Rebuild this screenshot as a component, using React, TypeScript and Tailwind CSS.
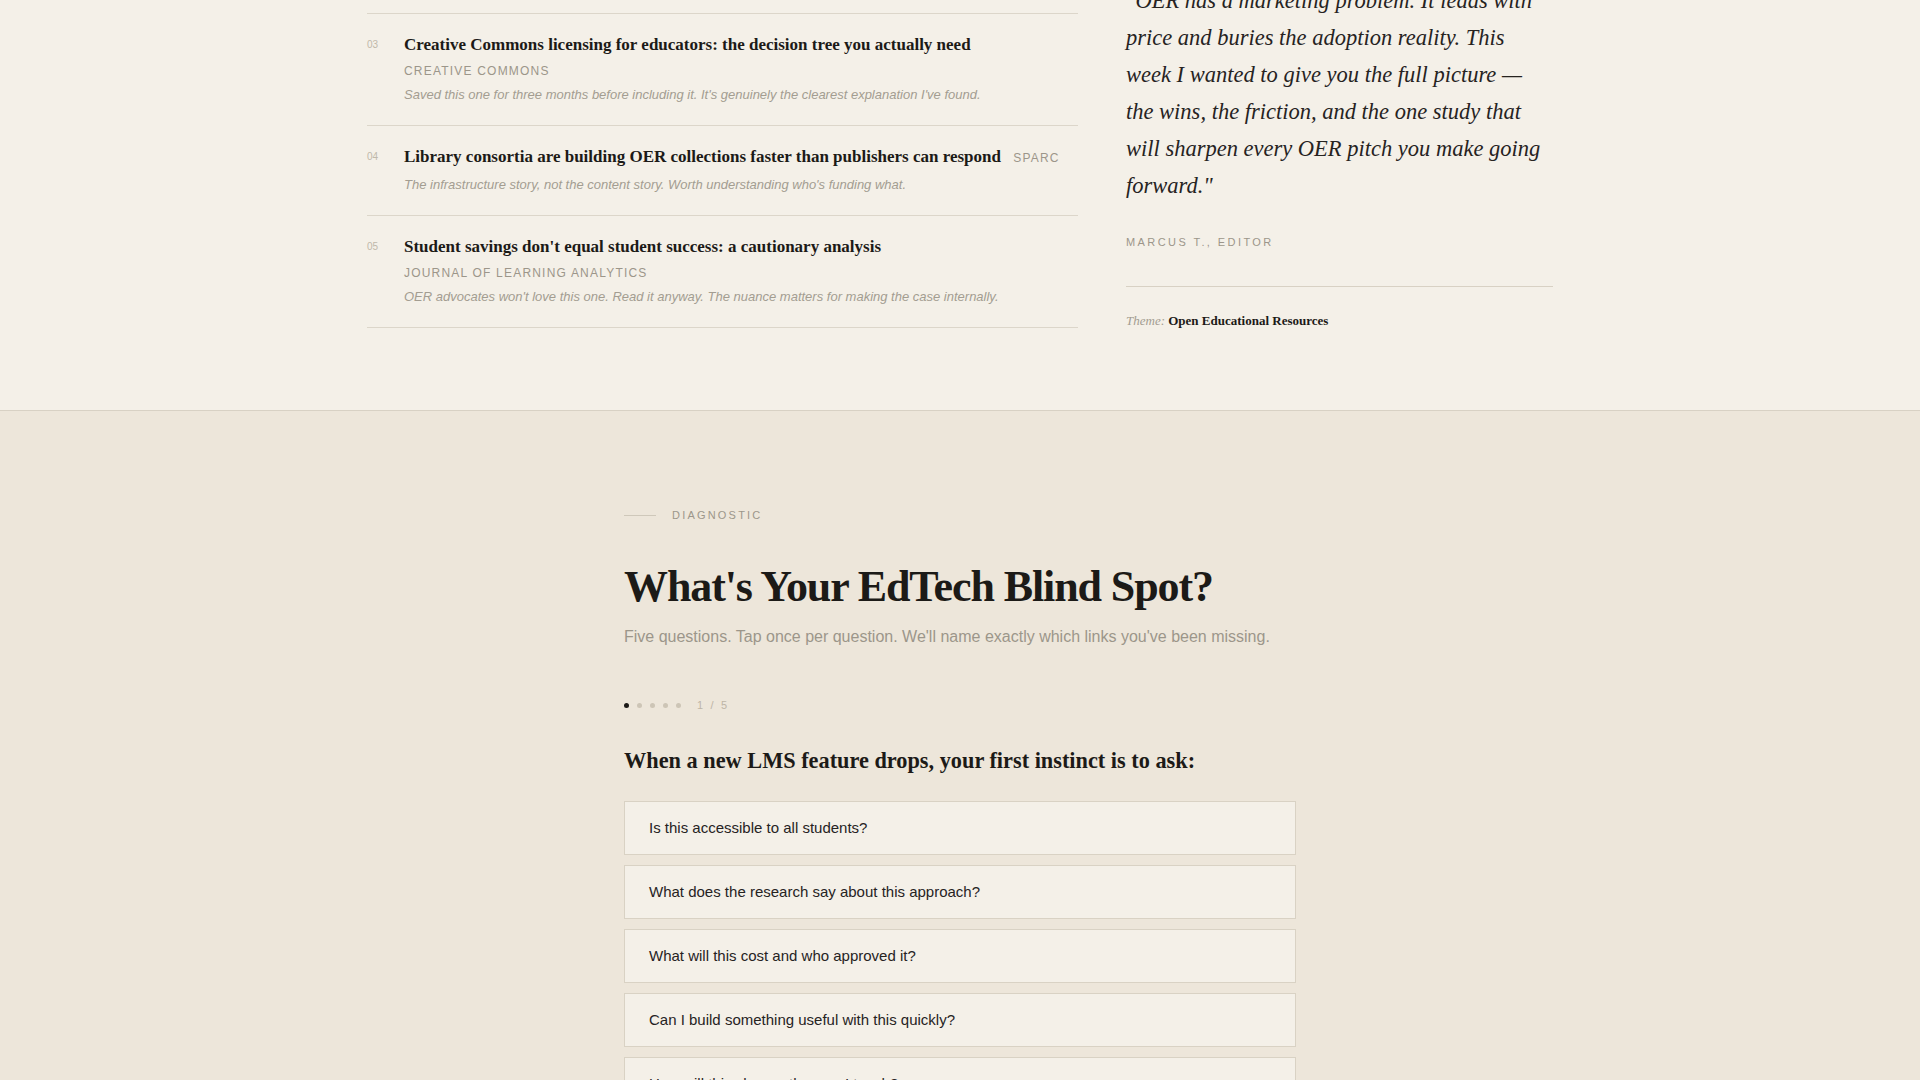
import React from 'react';

const serif = { fontFamily: '"Liberation Serif", "Times New Roman", serif' };
const sans = { fontFamily: '"Liberation Sans", Arial, sans-serif' };

interface Reading {
  num: string;
  title: string;
  source: string;
  note: string;
}

const readings: Reading[] = [
  {
    num: '03',
    title: 'Creative Commons licensing for educators: the decision tree you actually need',
    source: 'Creative Commons',
    note: "Saved this one for three months before including it. It's genuinely the clearest explanation I've found.",
  },
  {
    num: '04',
    title: 'Library consortia are building OER collections faster than publishers can respond',
    source: 'SPARC',
    note: "The infrastructure story, not the content story. Worth understanding who's funding what.",
  },
  {
    num: '05',
    title: "Student savings don't equal student success: a cautionary analysis",
    source: 'Journal of Learning Analytics',
    note: "OER advocates won't love this one. Read it anyway. The nuance matters for making the case internally.",
  },
];

const options = [
  'Is this accessible to all students?',
  'What does the research say about this approach?',
  'What will this cost and who approved it?',
  'Can I build something useful with this quickly?',
  'How will this change the way I teach?',
];

const ReadingRow: React.FC<{ item: Reading }> = ({ item }) => (
  <li className="flex border-b border-[#dcd6ca] pt-4 pb-5">
    <span className="w-[37px] shrink-0 pt-[10px] text-[10px] leading-[10px] text-[#bfb8aa]" style={sans}>
      {item.num}
    </span>
    <div className="min-w-0 flex-1">
      <p className="text-[17px] leading-[22px]" style={serif}>
        <span className="font-bold leading-[29px] text-[#1c1a17]">{item.title}</span>
        {/* collapsible gap: disappears when the source wraps to its own line */}
        <span className="[word-spacing:8px]"> </span>
        <span
          className="inline-block whitespace-nowrap text-[12px] uppercase leading-[16px] tracking-[0.1em] text-[#9c968a]"
          style={sans}
        >
          {item.source}
        </span>
      </p>
      <p className="mt-1 text-[13px] italic leading-[20px] text-[#a39d91]" style={sans}>
        {item.note}
      </p>
    </div>
  </li>
);

export default function App() {
  return (
    <div className="min-h-screen bg-[#ede6da]">
      {/* Reading list + editor's note */}
      <section className="border-b border-[#d8d1c4] bg-[#f4f0e8] pt-[13px] pb-[79px]">
        <div className="mx-auto grid w-[1186px] grid-cols-[711px_1fr] gap-12">
          <ul className="border-t border-[#dcd6ca]">
            {readings.map((r) => (
              <ReadingRow key={r.num} item={r} />
            ))}
          </ul>

          <aside className="-mt-[31px]">
            <p className="text-[22.5px] italic leading-[37px] text-[#26231f]" style={serif}>
              "OER has a marketing problem. It leads with price and buries the adoption reality. This week I
              wanted to give you the full picture — the wins, the friction, and the one study that will sharpen
              every OER pitch you make going forward."
            </p>
            <p className="mt-[30px] text-[11px] uppercase leading-[16px] tracking-[0.22em] text-[#9c968a]" style={sans}>
              Marcus T., Editor
            </p>
            <div className="mt-9 border-t border-[#d8d1c4] pt-6">
              <p className="text-[13px] leading-[20px]" style={serif}>
                <span className="italic text-[#a39d91]">Theme:</span>{' '}
                <span className="font-bold text-[#1c1a17]">Open Educational Resources</span>
              </p>
            </div>
          </aside>
        </div>
      </section>

      {/* Diagnostic quiz */}
      <section className="pt-[95px] pb-24">
        <div className="mx-auto max-w-2xl">
          <div className="flex items-center gap-4">
            <span className="h-px w-8 bg-[#cfc8ba]" />
            <span className="text-[11px] uppercase leading-[18px] tracking-[0.2em] text-[#9c968a]" style={sans}>
              Diagnostic
            </span>
          </div>

          <h2
            className="mt-9 text-[44px] font-bold leading-[53px] tracking-tight text-[#1c1a17]"
            style={serif}
          >
            What's Your EdTech Blind Spot?
          </h2>
          <p className="mt-3 text-[16px] leading-[24px] text-[#9c968a]" style={sans}>
            Five questions. Tap once per question. We'll name exactly which links you've been missing.
          </p>

          <div className="mt-[49px] flex items-center gap-2">
            {[0, 1, 2, 3, 4].map((i) => (
              <span
                key={i}
                className={i === 0 ? 'h-[5px] w-[5px] rounded-full bg-[#1c1a17]' : 'h-[5px] w-[5px] rounded-full bg-[#cdc5b6]'}
              />
            ))}
            <span className="ml-2 text-[11px] leading-[14px] tracking-[0.2em] text-[#bdb5a6]" style={sans}>
              1 / 5
            </span>
          </div>

          <h3 className="mt-[34px] text-[22.3px] font-bold leading-[30px] text-[#1c1a17]" style={serif}>
            When a new LMS feature drops, your first instinct is to ask:
          </h3>

          <div className="mt-[25px] flex flex-col gap-[10px]">
            {options.map((o) => (
              <button
                key={o}
                className="h-[54px] w-full border border-[#d9d2c4] bg-[#f4f0e8] px-6 text-left text-[15px] text-[#26231f]"
                style={sans}
              >
                {o}
              </button>
            ))}
          </div>
        </div>
      </section>
    </div>
  );
}
